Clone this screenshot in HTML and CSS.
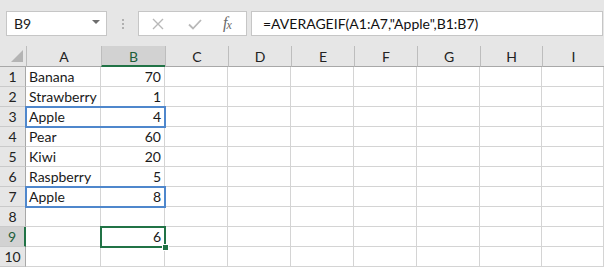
FILE: index.html
```html
<!DOCTYPE HTML>
<html lang="en">
<head>
    <meta charset="UTF-8">
    <title>AVERAGEIF</title>
    <link rel="stylesheet" href="styles.css">
</head>
<body>
    <div class="toolbar">
        <div class="namebox">
            <span>B9</span>
            <span class="drop"></span>
        </div>
        <div class="grip"><i></i><i></i><i></i></div>
        <div class="editbox">
            <svg class="ico" width="14" height="14" viewBox="0 0 14 14"><path d="M2 2 L12 12 M12 2 L2 12" stroke="#b8b8b8" stroke-width="1.4" fill="none"/></svg>
            <svg class="ico" width="16" height="14" viewBox="0 0 16 14"><path d="M2 7.5 L6 11.5 L14 3" stroke="#b8b8b8" stroke-width="1.8" fill="none"/></svg>
            <span class="fx">f<sub>x</sub></span>
        </div>
        <div class="formula">=AVERAGEIF(A1:A7,"Apple",B1:B7)</div>
    </div>

    <div class="sheet">
        <div class="hd corner"><span class="tri"></span></div>
        <div class="hd col">A</div>
        <div class="hd col sel">B</div>
        <div class="hd col">C</div>
        <div class="hd col">D</div>
        <div class="hd col">E</div>
        <div class="hd col">F</div>
        <div class="hd col">G</div>
        <div class="hd col">H</div>
        <div class="hd col">I</div>
    </div>

    <script>
        // rows are built from data so the markup stays short
        const rows = [
            ["Banana", 70], ["Strawberry", 1], ["Apple", 4], ["Pear", 60],
            ["Kiwi", 20], ["Raspberry", 5], ["Apple", 8], ["", ""], ["", 6], ["", ""]
        ];
        const sheet = document.querySelector(".sheet");
        rows.forEach((r, i) => {
            const n = document.createElement("div");
            n.className = "rowhd" + (i === 8 ? " sel" : "");
            n.textContent = i + 1;
            sheet.appendChild(n);
            const a = document.createElement("div");
            a.className = "cell";
            a.textContent = r[0];
            sheet.appendChild(a);
            const b = document.createElement("div");
            b.className = "cell num";
            b.textContent = r[1];
            sheet.appendChild(b);
            for (let c = 0; c < 7; c++) {
                const e = document.createElement("div");
                e.className = "cell";
                sheet.appendChild(e);
            }
        });
        ["hl r3", "hl r7", "active"].forEach(cls => {
            const box = document.createElement("div");
            box.className = cls;
            sheet.appendChild(box);
        });
        const handle = document.createElement("div");
        handle.className = "handle";
        sheet.appendChild(handle);
    </script>
</body>
</html>
```

FILE: styles.css
```css
body {
    margin: 0;
    width: 604px;
    height: 267px;
    overflow: hidden;
    background: #ffffff;
    font-family: Lato, "Liberation Sans", sans-serif;
    color: #1a1a1a;
}

.toolbar {
    height: 46px;
    box-sizing: border-box;
    background: #e6e6e6;
    display: flex;
    align-items: flex-start;
    padding: 11px 1px 0 6px;
}

.namebox, .editbox, .formula {
    height: 25px;
    box-sizing: border-box;
    background: #ffffff;
    border: 1px solid #c6c6c6;
}

.namebox {
    width: 101px;
    display: flex;
    align-items: center;
    justify-content: space-between;
    padding: 0 6px 0 7px;
    font-size: 14px;
}
.drop {
    width: 0; height: 0;
    border-left: 4px solid transparent;
    border-right: 4px solid transparent;
    border-top: 4px solid #6d6d6d;
    margin-top: -4px;
}

.grip {
    width: 31px;
    height: 25px;
    display: flex;
    flex-direction: column;
    align-items: center;
    justify-content: center;
    gap: 2px;
}
.grip i {
    width: 2px; height: 2px;
    background: #b0b0b0;
}

.editbox {
    width: 109px;
    display: flex;
    align-items: center;
    padding-left: 12px;
    gap: 22px;
}
.ico { display: block; }
.fx {
    font-family: "Liberation Serif", serif;
    font-style: italic;
    font-size: 16px;
    color: #6a6a6a;
    margin-left: -2px;
}
.fx sub {
    font-size: 12px;
    vertical-align: -1px;
    margin-left: -1px;
}

.formula {
    flex: 1;
    margin-left: 4px;
    padding-left: 11px;
    font-size: 14px;
    line-height: 23px;
    color: #111;
}

.sheet {
    position: relative;
    display: grid;
    grid-template-columns: 26px 75px 64px 63px 63px 63px 63px 63px 62px 62px;
    grid-template-rows: 21px;
    grid-auto-rows: 20px;
    font-size: 14px;
}

.hd {
    background: #e6e6e6;
    border-bottom: 1px solid #a8a8a8;
    box-sizing: border-box;
    text-align: center;
    line-height: 21px;
    color: #222;
}
.col {
    border-left: 1px solid #bdbdbd;
}
.corner {
    position: relative;
}
.tri {
    position: absolute;
    left: 11px;
    top: 4px;
    width: 0; height: 0;
    border-left: 12px solid transparent;
    border-bottom: 12px solid #b4b4b4;
}
.col.sel {
    background: #d2d2d2;
    border-bottom: 2px solid #217346;
    color: #1d5e3a;
}

.rowhd {
    background: #e6e6e6;
    border-right: 1px solid #a8a8a8;
    border-bottom: 1px solid #cacaca;
    box-sizing: border-box;
    text-align: center;
    line-height: 20px;
    color: #222;
}
.rowhd.sel {
    background: #d2d2d2;
    border-right: 2px solid #217346;
    color: #1d5e3a;
}

.cell {
    border-right: 1px solid #d4d4d4;
    border-bottom: 1px solid #d4d4d4;
    box-sizing: border-box;
    padding: 0 3px;
    line-height: 20px;
    white-space: nowrap;
}
.num { text-align: right; }

.hl, .active {
    position: absolute;
    box-sizing: border-box;
    pointer-events: none;
}
.hl {
    left: 25px;
    width: 141px;
    height: 22px;
    border: 2px solid #4f87cc;
}
.r3 { top: 60px; }
.r7 { top: 140px; }
.active {
    left: 100px;
    top: 180px;
    width: 66px;
    height: 22px;
    border: 2px solid #217346;
}
.handle {
    position: absolute;
    left: 162px;
    top: 198px;
    width: 5px;
    height: 5px;
    background: #217346;
    border: 1px solid #ffffff;
}
```
